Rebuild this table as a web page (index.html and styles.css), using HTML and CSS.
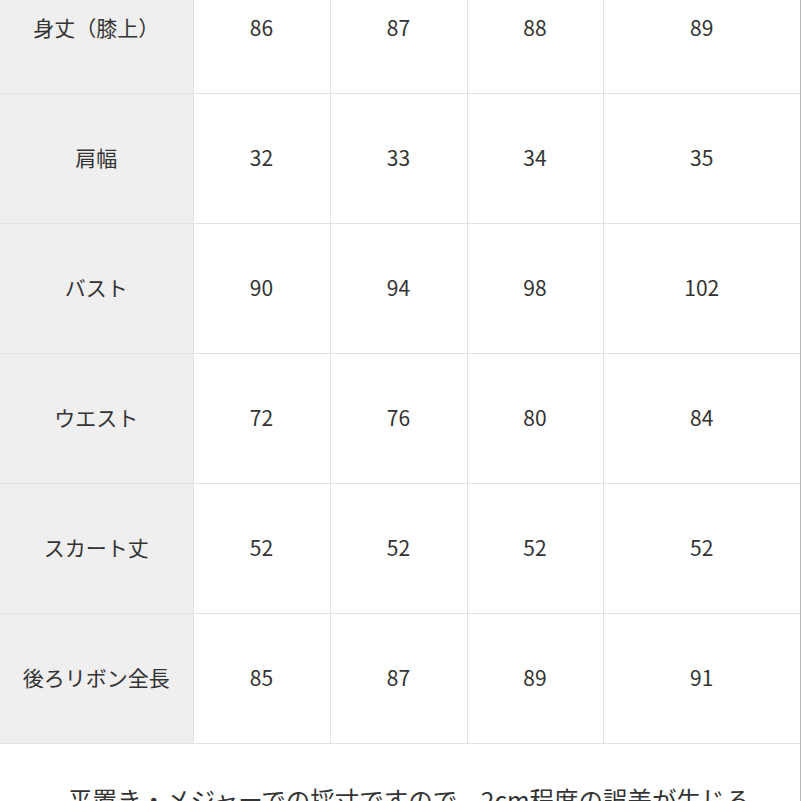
FILE: index.html
```html
<!DOCTYPE html>
<html lang="ja">
<head>
<meta charset="utf-8">
<link rel="stylesheet" href="styles.css">
</head>
<body>
<div class="sheet">
  <table class="size-table">
    <colgroup>
      <col class="c-label"><col class="c-s"><col class="c-s"><col class="c-s3"><col>
    </colgroup>
    <tbody>
      <tr><th>身丈（膝上）</th><td>86</td><td>87</td><td>88</td><td>89</td></tr>
      <tr><th>肩幅</th><td>32</td><td>33</td><td>34</td><td>35</td></tr>
      <tr><th>バスト</th><td>90</td><td>94</td><td>98</td><td>102</td></tr>
      <tr><th>ウエスト</th><td>72</td><td>76</td><td>80</td><td>84</td></tr>
      <tr><th>スカート丈</th><td>52</td><td>52</td><td>52</td><td>52</td></tr>
      <tr><th>後ろリボン全長</th><td>85</td><td>87</td><td>89</td><td>91</td></tr>
    </tbody>
  </table>
  <p class="note">平置き・メジャーでの採寸ですので、2cm程度の誤差が生じる</p>
</div>
</body>
</html>
```

FILE: styles.css
```css
html, body {
  margin: 0;
  padding: 0;
  background: #ffffff;
}
body {
  width: 801px;
  height: 801px;
  overflow: hidden;
  font-family: "Noto Sans CJK JP", "Noto Sans", sans-serif;
  color: #333333;
}
.sheet {
  margin-top: -36px;
  width: 800px;
  border-right: 1px solid #b8b8b8;
  min-height: 900px;
}
.size-table {
  width: 800px;
  border-collapse: collapse;
  table-layout: fixed;
}
.c-label { width: 193px; }
.c-s { width: 137px; }
.c-s3 { width: 136px; }
.size-table th,
.size-table td {
  height: 125px;
  padding: 0 0 4px 0;
  text-align: center;
  vertical-align: middle;
  font-size: 21px;
  font-weight: normal;
  border-bottom: 1px solid #e2e2e2;
  border-right: 1px solid #e2e2e2;
}
.size-table th {
  background: #efefef;
  color: #333333;
}
.size-table td:last-child {
  border-right: none;
}
.note {
  margin: 39px 0 0 0;
  padding-left: 68px;
  font-size: 24.5px;
  line-height: 34px;
  color: #333333;
  white-space: nowrap;
}
```
